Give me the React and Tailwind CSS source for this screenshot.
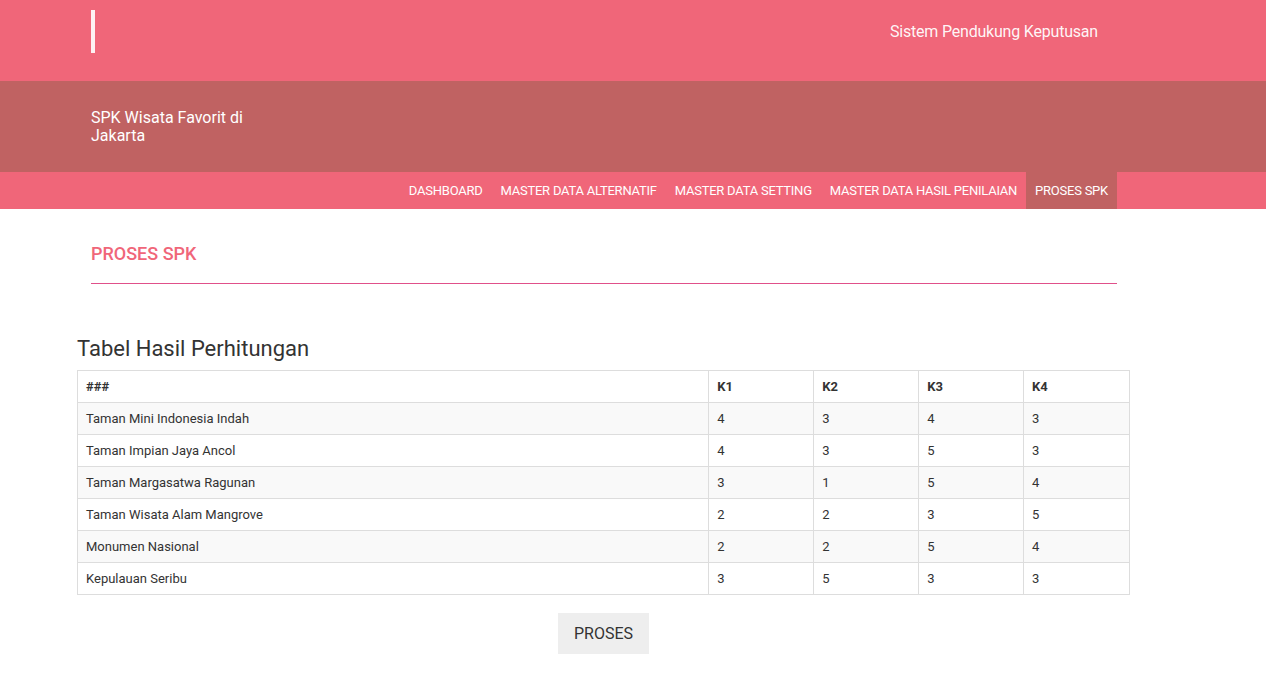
const rows = [
  ["Taman Mini Indonesia Indah", 4, 3, 4, 3],
  ["Taman Impian Jaya Ancol", 4, 3, 5, 3],
  ["Taman Margasatwa Ragunan", 3, 1, 5, 4],
  ["Taman Wisata Alam Mangrove", 2, 2, 3, 5],
  ["Monumen Nasional", 2, 2, 5, 4],
  ["Kepulauan Seribu", 3, 5, 3, 3],
];

const menu = [
  "DASHBOARD",
  "MASTER DATA ALTERNATIF",
  "MASTER DATA SETTING",
  "MASTER DATA HASIL PENILAIAN",
  "PROSES SPK",
];

export default function App() {
  return (
    <div className="min-h-[679px] bg-white font-['Roboto',sans-serif] text-[#333]">
      <header className="bg-[#f06679]">
        <div className="flex h-[81px] items-start justify-between pl-[91px] pr-[168px]">
          <div className="mt-[10px] h-[43px] w-[4px] bg-white/90" />
          <div className="mt-[20px] text-[16px] tracking-[-0.2px] text-white/95">Sistem Pendukung Keputusan</div>
        </div>
        <div className="h-[91px] bg-[#c06262] pl-[91px] pt-[28px]">
          <div className="w-[170px] text-[16px] leading-[18px] text-white">
            SPK Wisata Favorit di Jakarta
          </div>
        </div>
        <nav className="flex h-[37px] justify-end pr-[149px]">
          {menu.map((m) => (
            <a
              key={m}
              className={
                "flex items-center px-[9px] text-[13px] tracking-[-0.24px] text-white " +
                (m === "PROSES SPK" ? "bg-[#c06262]" : "")
              }
            >
              {m}
            </a>
          ))}
        </nav>
      </header>

      <main className="pt-[35px]">
        <div className="ml-[91px] w-[1026px]">
          <h2 className="text-[18px] font-medium leading-[20px] text-[#f06679]">PROSES SPK</h2>
          <div className="mt-[19px] h-px bg-[#e0508a]" />
        </div>

        <div className="ml-[77px] w-[1053px] pt-[52px]">
          <h3 className="mb-[8px] text-[22px] leading-[26px] text-[#333]">Tabel Hasil Perhitungan</h3>
          <table className="w-full border-collapse border border-[#ddd] text-[13px]">
            <thead>
              <tr className="h-[32px]">
                <th className="w-[632px] border border-[#ddd] px-[8px] text-left font-bold">###</th>
                <th className="w-[105px] border border-[#ddd] px-[8px] text-left font-bold">K1</th>
                <th className="w-[105px] border border-[#ddd] px-[8px] text-left font-bold">K2</th>
                <th className="w-[105px] border border-[#ddd] px-[8px] text-left font-bold">K3</th>
                <th className="w-[106px] border border-[#ddd] px-[8px] text-left font-bold">K4</th>
              </tr>
            </thead>
            <tbody>
              {rows.map((r, i) => (
                <tr key={r[0]} className={"h-[32px] " + (i % 2 === 0 ? "bg-[#f9f9f9]" : "bg-white")}>
                  {r.map((c, j) => (
                    <td key={j} className="border border-[#ddd] px-[8px]">
                      {c}
                    </td>
                  ))}
                </tr>
              ))}
            </tbody>
          </table>
          <div className="flex justify-center pt-[18px]">
            <button className="h-[41px] w-[91px] bg-[#eee] text-[16px] text-[#333]">PROSES</button>
          </div>
        </div>
      </main>
    </div>
  );
}
